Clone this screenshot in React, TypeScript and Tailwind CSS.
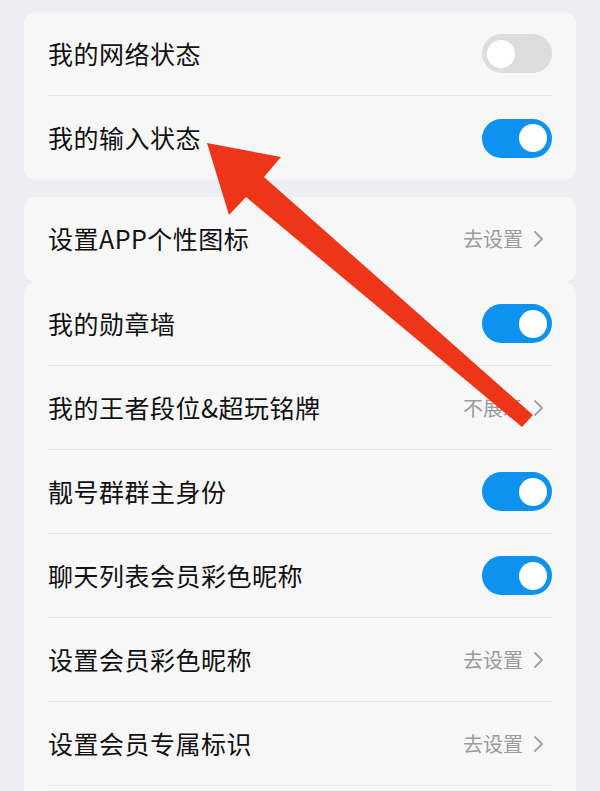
import React from 'react';

type Row = {
    label: string;
    kind: 'on' | 'off' | 'link';
    value?: string;
};

const Toggle = ({on}: {on: boolean}) => (
    <div
        className={`w-[70px] h-[39px] rounded-full flex items-center px-[5px] ${on ? 'bg-[#0d93ef] justify-end' : 'bg-[#dddddd] justify-start'}`}
    >
        <div className="w-[28px] h-[28px] rounded-full bg-white" />
    </div>
);

const Chevron = () => (
    <svg width="11" height="18" viewBox="0 0 11 18" fill="none">
        <path d="M2 2 L9 9 L2 16" stroke="#a2a2a2" strokeWidth="1.8" strokeLinecap="round" strokeLinejoin="round" />
    </svg>
);

const SettingRow = ({row, divider}: {row: Row; divider: boolean}) => (
    <div className={`h-[84px] flex items-center justify-between ${divider ? 'border-b border-[#e4e4e6]' : ''}`}>
        <span className="text-[25px] text-[#111111] tracking-[0.5px]">{row.label}</span>
        {row.kind === 'link' ? (
            <div className="flex items-center gap-[10px] mr-[8px]">
                <span className="text-[20px] text-[#9b9b9b]">{row.value}</span>
                <Chevron />
            </div>
        ) : (
            <Toggle on={row.kind === 'on'} />
        )}
    </div>
);

const Card = ({rows, lastDivider, className}: {rows: Row[]; lastDivider: boolean; className?: string}) => (
    <div className={`bg-[#f7f7f8] rounded-[12px] px-6 ${className ?? ''}`}>
        {rows.map((row, i) => (
            <SettingRow key={row.label} row={row} divider={i < rows.length - 1 || lastDivider} />
        ))}
    </div>
);

const App = () => {
    const statusRows: Row[] = [
        {label: '我的网络状态', kind: 'off'},
        {label: '我的输入状态', kind: 'on'},
    ];
    const iconRows: Row[] = [
        {label: '设置APP个性图标', kind: 'link', value: '去设置'},
    ];
    const memberRows: Row[] = [
        {label: '我的勋章墙', kind: 'on'},
        {label: '我的王者段位&超玩铭牌', kind: 'link', value: '不展示'},
        {label: '靓号群群主身份', kind: 'on'},
        {label: '聊天列表会员彩色昵称', kind: 'on'},
        {label: '设置会员彩色昵称', kind: 'link', value: '去设置'},
        {label: '设置会员专属标识', kind: 'link', value: '去设置'},
    ];

    return (
        <div
            className="relative w-[600px] h-[791px] overflow-hidden bg-[#eeeef2] px-6 pt-3"
            style={{fontFamily: '"Noto Sans CJK SC", "Noto Sans", sans-serif'}}
        >
            <Card rows={statusRows} lastDivider={false} />
            <Card rows={iconRows} lastDivider={false} className="mt-[17px] h-[85px]" />
            <Card rows={memberRows} lastDivider={true} className="pb-10" />

            {/* red annotation arrow */}
            <svg className="absolute inset-0 pointer-events-none" width="600" height="791" viewBox="0 0 600 791">
                <polygon
                    points="207,143 281,157 264,177 533,415 522,427 246,197 229,215"
                    fill="#ee3517"
                />
            </svg>
        </div>
    );
};

export default App;
